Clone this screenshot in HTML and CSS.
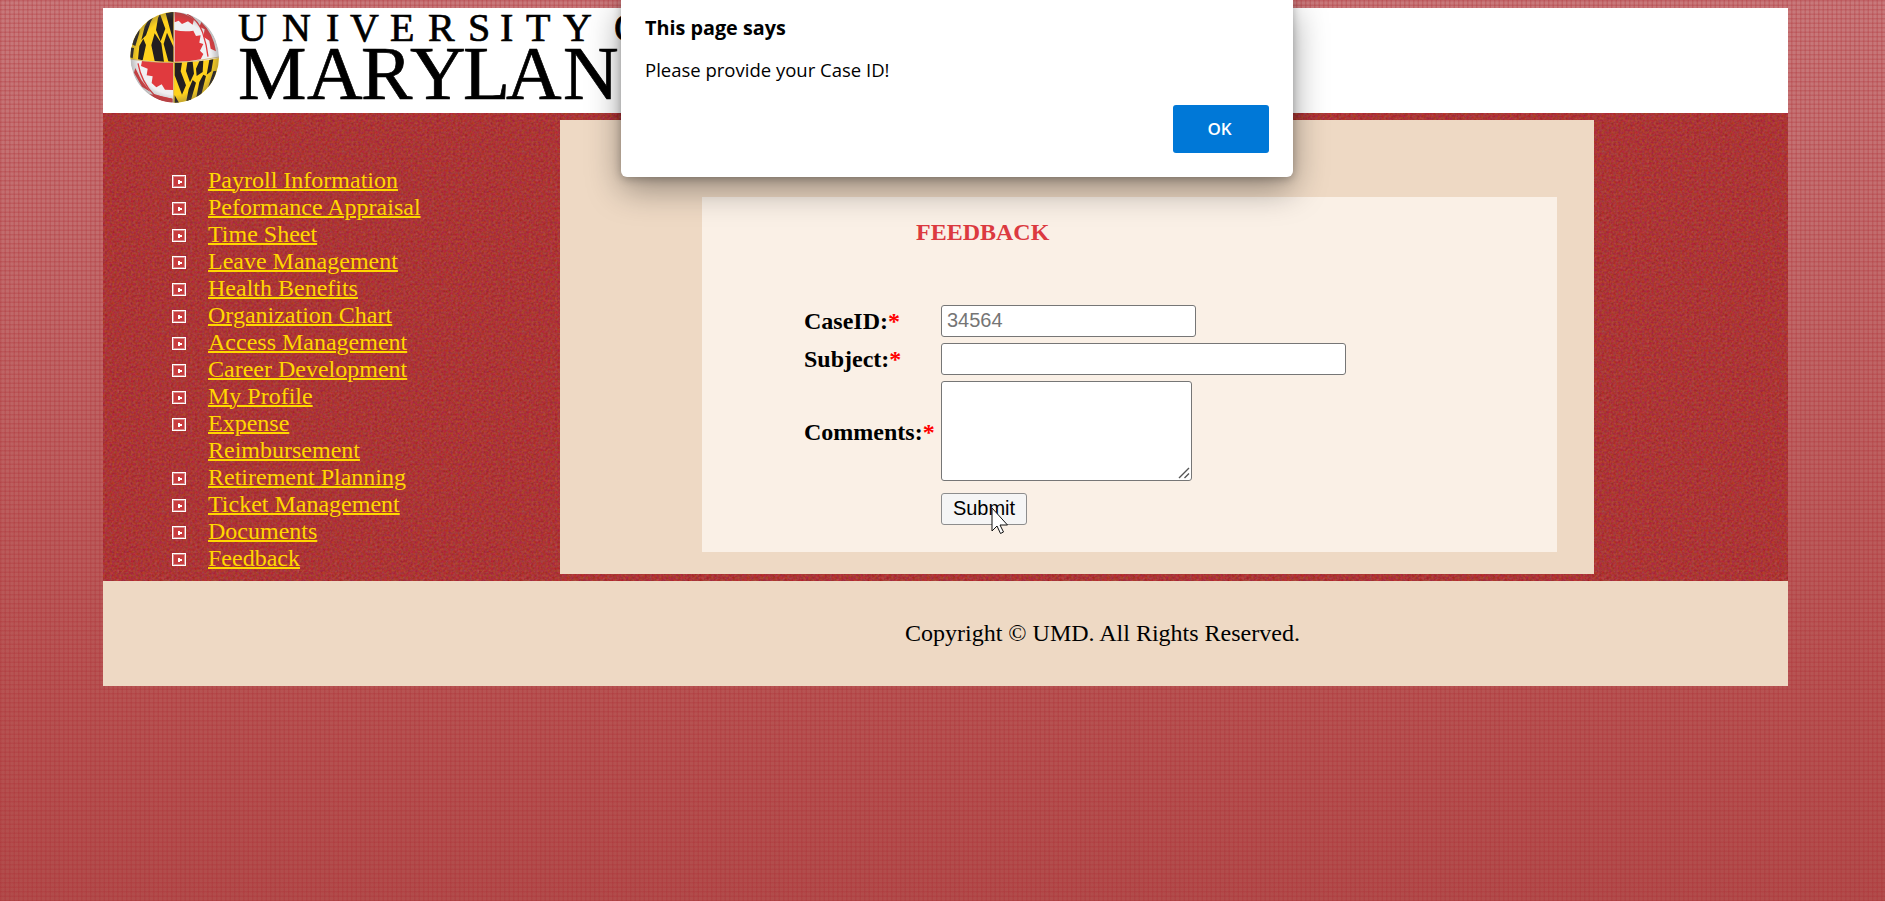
FILE: index.html
```
<!DOCTYPE html>
<html lang="en">
<head>
<meta charset="utf-8">
<title>Feedback</title>
<link rel="stylesheet" href="styles.css">
</head>
<body>
<div class="page">
  <header class="banner">
    <svg class="logo" width="620" height="105" viewBox="103 8 620 105" role="img" aria-label="University of Maryland">
      <defs>
        <clipPath id="ball"><ellipse cx="152" cy="148" rx="133" ry="136"/></clipPath>
        <radialGradient id="shade"><stop offset=".82" stop-color="#555" stop-opacity="0"/><stop offset="1" stop-color="#555" stop-opacity=".35"/></radialGradient>
      </defs>
      <g transform="translate(124 8) scale(.3333)" clip-path="url(#ball)">
        <path fill="#f0f0f2" d="M0 0h300v300H0z"/>
        <path fill="#ffd21c" d="M0 0h149v163Q80 162 0 150zM149 163q70 2 151-16v153H149z"/>
        <path fill="#231f20" d="M149 10v92l-12-42-12-44zM108 18l-6 12-6 36 14 34 14-38zM149 118v44l-16-2-14-52 10-34zM92 76l-10 36 10 47 28 2-8-55zM92 20L78 26 62 56 52 96l14-14 14-40zM58 92l-12 22-4 40 14 3 10-46zM48 48L34 70 22 108l12 6 12-40zM30 120l-12-2v30l8 3z"/>
        <path fill="#231f20" d="M152 164h22l-4 26 16 42-12 28-22-58zM152 262l14 24-14 2zM190 163l16-2 4 36-12 26-12-34zM206 216l10 8-16 56-14 4 8-40zM226 160l12-2-2 34-18 12-2-22zM238 200l8 4-14 56-16 14 10-52zM256 156l12-2-6 36-14 10zM268 190l10-2-18 54-12 10z"/>
        <path fill="#e03a3e" d="M152 66q28 6 56 2l8 16 14-2-4 22 12 4-10 20 10 10-8 16q-36 8-78 7zM152 12q34 2 58 22l-4 16-14-10-18 8-10-10-12 5zM232 42q36 34 44 88l-16-8-4-24-18-12 4-22-16-8z"/>
        <path fill="#e03a3e" d="M54 159q44 5 93 5v82l-24-1-10-16-16 9-14-13 3-20-18-3 3-20-20-8zM34 180l18 36 28 36-26-16-24-42zM76 258l34 6 36 8v12q-40 0-70-26z"/>
        <path fill="none" stroke="#e03a3e" stroke-width="4" d="M190 18q34 20 46 56t16 72M42 166q10 56 48 94 24 10 54 14"/>
        <path fill="none" stroke="#c9a24b" stroke-width="2" d="M149 10v278M16 153q130 24 270-6"/>
        <ellipse cx="152" cy="148" rx="133" ry="136" fill="url(#shade)"/>
      </g>
      <g class="wordmark">
        <text y="41" font-size="40" x="238 282 326 350 390 428 468 500 526 563 614">UNIVERSITYO</text>
        <text y="99" font-size="77" x="238 307 361 410 463 506 563">MARYLAN</text>
      </g>
    </svg>
  </header>
  <div class="main">
    <nav class="side">
      <ul class="menu">
        <li><a href="#">Payroll Information</a></li>
        <li><a href="#">Peformance Appraisal</a></li>
        <li><a href="#">Time Sheet</a></li>
        <li><a href="#">Leave Management</a></li>
        <li><a href="#">Health Benefits</a></li>
        <li><a href="#">Organization Chart</a></li>
        <li><a href="#">Access Management</a></li>
        <li><a href="#">Career Development</a></li>
        <li><a href="#">My Profile</a></li>
        <li><a href="#">Expense<br>Reimbursement</a></li>
        <li><a href="#">Retirement Planning</a></li>
        <li><a href="#">Ticket Management</a></li>
        <li><a href="#">Documents</a></li>
        <li><a href="#">Feedback</a></li>
      </ul>
    </nav>
    <main class="content">
      <section class="panel">
        <h1 class="title">FEEDBACK</h1>
        <form class="form">
          <label for="case">CaseID:<span class="req">*</span></label>
          <input class="field case" id="case" placeholder="34564">
          <label for="subject">Subject:<span class="req">*</span></label>
          <input class="field subject" id="subject">
          <label class="low" for="comments">Comments:<span class="req">*</span></label>
          <div class="area">
            <textarea class="field comments" id="comments"></textarea>
            <svg class="grip" width="12" height="12" viewBox="0 0 12 12"><path d="M1 11L11 1M6.500 11L11 6.500" stroke="#555" stroke-width="1.400" fill="none"/></svg>
          </div>
          <button class="submit" type="button">Submit
            <svg class="cursor" width="18" height="28" viewBox="0 0 18 28"><path d="M1 1v23l5-5 3.500 7.500 3-1.500L9 18h7.500z" fill="#fff" stroke="#111" stroke-width="1"/></svg>
          </button>
        </form>
      </section>
    </main>
  </div>
  <footer class="footer">Copyright © UMD. All Rights Reserved.</footer>
</div>
<div class="dialog" role="alertdialog">
  <div class="dialog-title">This page says</div>
  <div class="dialog-text">Please provide your Case ID!</div>
  <button class="ok" type="button">OK</button>
</div>
</body>
</html>
```
FILE: styles.css
```
*, *::before { box-sizing: border-box; }
html { height: 100%; }
body {
  --line: rgba(172, 44, 50, .27);
  --soft: rgba(172, 44, 50, .13);
  margin: 0;
  height: 901px;
  overflow: hidden;
  padding: 8px 97px 0 103px;
  font: 24px/27px "Liberation Serif", serif;
  background:
    repeating-linear-gradient(90deg, var(--line) 0 1px, var(--soft) 1px 2px, transparent 2px 4px, var(--soft) 4px 5px, var(--line) 5px 6px, transparent 6px 9px),
    repeating-linear-gradient(var(--line) 0 1px, var(--soft) 1px 2px, transparent 2px 4px, var(--soft) 4px 5px, var(--line) 5px 6px, transparent 6px 9px),
    linear-gradient(#c8797b, #b75453 75%, #b14c4b);
}
.banner { height: 105px; background: #fff; }
.logo { display: block; overflow: visible; }
.wordmark { font-family: "Liberation Serif", serif; fill: #000; stroke: #000; stroke-width: .7px; }
.main {
  display: flex;
  height: 468px;
  padding: 7px 194px 7px 0;
  background:
    url("data:image/svg+xml,%3Csvg xmlns='http://www.w3.org/2000/svg' width='180' height='180'%3E%3Cfilter id='n' x='0' y='0' width='100%25' height='100%25' color-interpolation-filters='sRGB'%3E%3CfeTurbulence type='fractalNoise' baseFrequency='.42' numOctaves='2' stitchTiles='stitch'/%3E%3CfeColorMatrix values='.2 0 0 0 .57 0 .27 0 0 .075 0 0 .27 0 .075 0 0 0 0 1'/%3E%3C/filter%3E%3Crect width='180' height='180' filter='url(%23n)'/%3E%3C/svg%3E"),
    #ac3535;
}
.side { width: 457px; }
.menu { list-style: none; margin: 0; padding: 47px 0 0 105px; }
.menu li { position: relative; }
.menu a { color: #ffd700; text-decoration-thickness: 2px; }
.menu li::before {
  content: "";
  position: absolute;
  left: -36px;
  top: 8px;
  width: 14px;
  height: 13px;
  border: 1px solid #fff;
  background: linear-gradient(#fff, #fff) 5px 4px / 2px 4px no-repeat, linear-gradient(#fff, #fff) 7px 5px / 2px 2px no-repeat, #c73c3e;
  box-shadow: inset 0 0 0 1px #d98a8a;
}
.content { width: 1034px; padding: 77px 37px 22px 142px; background: #eed9c4; }
.panel { height: 355px; padding-left: 100px; background: #faf0e6; }
.title { margin: 0; padding: 22px 0 0 114px; font-size: 24px; line-height: 27px; color: #dc3a40; }
.form {
  display: grid;
  grid-template-columns: 131px max-content;
  grid-template-rows: 32px 32px 100px 32px;
  column-gap: 6px;
  row-gap: 6px;
  align-items: center;
  justify-items: start;
  margin-top: 59px;
  padding-left: 2px;
  font-weight: bold;
}
.low { padding-top: 3px; }
.req { color: red; }
.field { display: block; margin: 0; padding: 1px 5px; border: 1px solid #767676; border-radius: 3px; font: 20px "Liberation Sans", sans-serif; background: #fff; }
.case { width: 255px; height: 32px; padding-bottom: 3px; }
.subject { width: 405px; height: 32px; }
.area { position: relative; }
.comments { width: 251px; height: 100px; resize: none; }
.grip { position: absolute; right: 2px; bottom: 2px; }
.submit {
  grid-column: 2;
  position: relative;
  width: 86px;
  height: 32px;
  margin-top: 12px;
  padding: 0 0 2px;
  border: 1px solid #8d8d8d;
  border-radius: 3px;
  background: #f5f5f5;
  font: 20px "Liberation Sans", sans-serif;
}
.cursor { position: absolute; left: 49px; top: 13px; }
.footer { height: 105px; padding: 39px 0 0 802px; background: #eed9c4; }
.dialog {
  position: absolute;
  left: 621px;
  top: 0;
  display: flex;
  flex-direction: column;
  width: 672px;
  height: 177px;
  padding: 14px 24px 0;
  border-radius: 0 0 6px 6px;
  background: #fff;
  box-shadow: 0 12px 34px rgba(0, 0, 0, .38), 0 2px 8px rgba(0, 0, 0, .25);
  font: 18.500px/27px "Open Sans", "Noto Sans", sans-serif;
}
.dialog-title { font-size: 19.800px; font-weight: bold; }
.dialog-text { margin-top: 15px; }
.ok {
  align-self: flex-end;
  width: 96px;
  height: 48px;
  margin-top: 22px;
  padding: 0 3px 2px 0;
  border: 0;
  border-radius: 3px;
  background: #0078d7;
  color: #fff;
  font: 600 17px "Open Sans", "Noto Sans", sans-serif;
}
```
